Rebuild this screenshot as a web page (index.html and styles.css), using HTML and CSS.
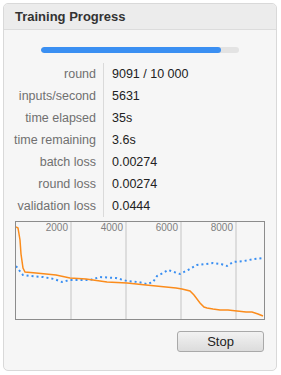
FILE: index.html
```html
<!DOCTYPE html>
<html lang="en">
<head>
    <meta charset="UTF-8">
    <title>Training Progress</title>
    <link rel="stylesheet" href="styles.css">
</head>
<body>
    <div class="panel">
        <div class="panel-head">Training Progress</div>

        <div class="panel-body">
            <div class="progress"><div class="progress-fill" style="width: 90.91%;"></div></div>

            <table class="stats">
                <tr><td class="key">round</td><td class="val">9091 / 10 000</td></tr>
                <tr><td class="key">inputs/second</td><td class="val">5631</td></tr>
                <tr><td class="key">time elapsed</td><td class="val">35s</td></tr>
                <tr><td class="key">time remaining</td><td class="val">3.6s</td></tr>
                <tr><td class="key">batch loss</td><td class="val">0.00274</td></tr>
                <tr><td class="key">round loss</td><td class="val">0.00274</td></tr>
                <tr><td class="key">validation loss</td><td class="val">0.0444</td></tr>
            </table>

            <div class="chart">
                <svg width="248" height="97" viewBox="0 0 248 97">
                    <g class="grid">
                        <line x1="55" y1="0" x2="55" y2="97"/>
                        <line x1="110" y1="0" x2="110" y2="97"/>
                        <line x1="165" y1="0" x2="165" y2="97"/>
                        <line x1="220" y1="0" x2="220" y2="97"/>
                    </g>
                    <g class="ticks">
                        <text x="52" y="9">2000</text>
                        <text x="107" y="9">4000</text>
                        <text x="162" y="9">6000</text>
                        <text x="217" y="9">8000</text>
                    </g>
                    <polyline class="val-line" points="0,44 3,48 7,53 14,54 27,55 38,57 46,60 54,58 66,58 74,58 84,55 100,56 111,59 122,60 131,62 137,60 141,54 147,51 152,48 158,50 164,52 172,48 181,43 190,42 197,41 205,42 211,44 217,40 228,39 238,37 247,36"/>
                    <polyline class="loss-line" points="0,5 2,6 4,18 5,32 7,46 9,50 20,51 40,53 54,56 70,57 91,60 111,61 130,63 150,65 160,66 166,67 174,69 178,73 184,81 188,85 191,86 197,87 204,88 212,88 221,89 230,90 236,90 242,92 247,94"/>
                </svg>
            </div>

            <div class="actions">
                <button class="stop">Stop</button>
            </div>
        </div>
    </div>
</body>
</html>
```

FILE: styles.css
```css
body {
    margin: 0;
    padding: 3px 4px 4px 3px;
    background: white;
    font-family: "Liberation Sans", Arial, sans-serif;
}

.panel {
    border: 1px solid #d9d9d9;
    border-radius: 5px;
    background: #f6f6f6;
    overflow: hidden;
}

.panel-head {
    background: #ececec;
    border-bottom: 1px solid #dcdcdc;
    height: 25px;
    line-height: 26px;
    padding-left: 11px;
    font-size: 13px;
    font-weight: bold;
    color: #333;
}

.panel-body {
    padding: 17px 11px 18px 11px;
}

.progress {
    width: 198px;
    height: 6px;
    margin: 0 auto;
    background: #e3e3e3;
    border-radius: 3px;
    overflow: hidden;
}

.progress-fill {
    height: 100%;
    background: #3a8ff2;
    border-radius: 3px;
}

.stats {
    border-collapse: collapse;
    margin: 10px 0 4px -11px;
    font-size: 12.5px;
}

.stats td {
    height: 22px;
    padding: 0;
}

.key {
    width: 92px;
    text-align: right;
    padding-right: 7px !important;
    border-right: 1px solid #dadada;
    color: #707070;
    white-space: nowrap;
}

.val {
    padding-left: 8px !important;
    color: #222;
}

.chart {
    border: 1px solid #8c8c8c;
    height: 97px;
    width: 248px;
    background: #f6f6f6;
}

.chart svg {
    display: block;
}

.grid line {
    stroke: #c4c4c4;
    stroke-width: 1;
}

.ticks text {
    font-family: "Liberation Sans", Arial, sans-serif;
    font-size: 10px;
    fill: #808080;
    text-anchor: end;
}

.loss-line {
    fill: none;
    stroke: #fb8c1c;
    stroke-width: 1.5;
}

.val-line {
    fill: none;
    stroke: #3a8ff2;
    stroke-width: 2;
    stroke-dasharray: 2 3;
}

.actions {
    display: flex;
    justify-content: flex-end;
    margin-top: 11px;
}

.stop {
    width: 87px;
    height: 21px;
    margin-right: 1px;
    border: 1px solid #a9a9a9;
    border-radius: 3px;
    background: linear-gradient(#f2f2f2, #dcdcdc);
    font-family: "Liberation Sans", Arial, sans-serif;
    font-size: 13px;
    color: #222;
    padding: 0;
}
```
